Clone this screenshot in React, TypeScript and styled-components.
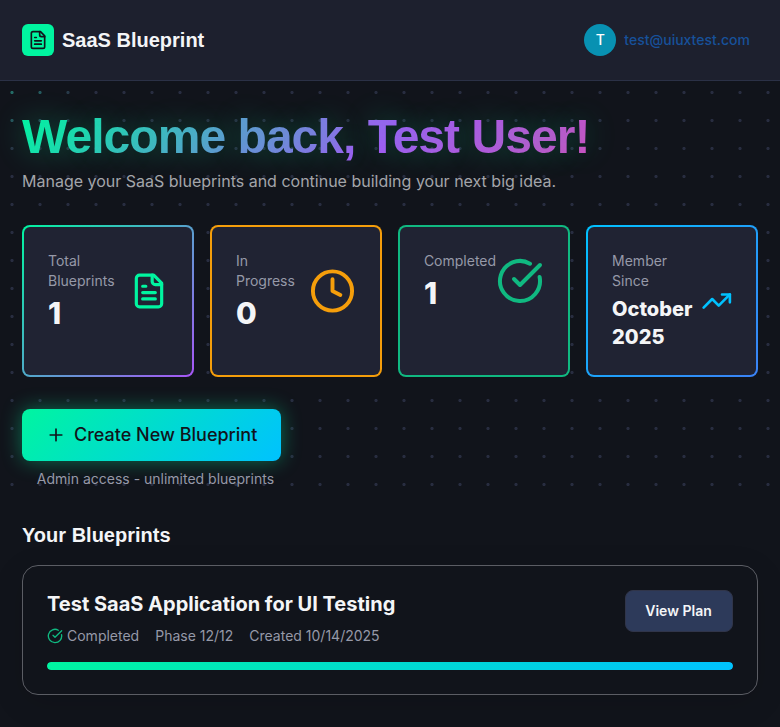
import React from "react";
import styled, { createGlobalStyle } from "styled-components";

const GlobalStyle = createGlobalStyle`
  *, *::before, *::after { box-sizing: border-box; }
  html, body { margin: 0; background: #11141b; }
  body { overflow: hidden; font-family: Inter, "Noto Sans", sans-serif; color: #f4f5f7; }
  h1, h2, h3, p { margin: 0; }
`;

const Page = styled.div`
  height: 727px;
  overflow: hidden;
  display: flex;
  flex-direction: column;
  background: #11141b;
`;

const Header = styled.header`
  height: 81px;
  flex: none;
  padding: 0 30px 0 22px;
  display: flex;
  align-items: center;
  justify-content: space-between;
  background: #1d202e;
  border-bottom: 1px solid #2b3146;
`;

const Brand = styled.div`
  display: flex;
  align-items: center;
  gap: 8px;
  font: 700 20px/28px "Liberation Sans", Arial, sans-serif;
`;

const LogoTile = styled.span`
  width: 32px;
  height: 32px;
  border-radius: 6px;
  display: grid;
  place-items: center;
  color: #11141b;
  background: #00f5a0;
`;

const Account = styled.div`
  display: flex;
  align-items: center;
  gap: 8px;
  font-size: 14px;
  line-height: 20px;
  font-weight: 500;
  color: #17519a;
`;

const Avatar = styled.span`
  width: 32px;
  height: 32px;
  border-radius: 50%;
  display: grid;
  place-items: center;
  color: #fff;
  background: #0891b2;
`;

const Main = styled.main`
  position: relative;
  flex: 1;
  padding: 32px 22px;
`;

const DotGrid = styled.div`
  position: absolute;
  inset: 0 0 auto;
  height: 420px;
  background: radial-gradient(circle at 8px 0, #23756a 0, #25575d 36px, #282d40 72px);
  mask-image: radial-gradient(circle at 14px 14.5px, #000 1.2px, transparent 2px);
  mask-size: 28px 28px;
  mask-position: -2px -3px;
`;

const Content = styled.div`
  position: relative;
`;

const Title = styled.h1`
  font: 700 48px/48px "Liberation Sans", Arial, sans-serif;
  letter-spacing: -0.96px;
  color: transparent;
  background: linear-gradient(135deg, #00f5a0 0%, #a855f7 50%, #ec4899 100%);
  background-clip: text;
  text-shadow: 0 0 30px rgba(0, 245, 160, 0.3);
`;

const Lead = styled.p`
  margin-top: 8px;
  font-size: 16px;
  line-height: 24px;
  color: #a3a5aa;
`;

const Stats = styled.section`
  margin-top: 32px;
  display: grid;
  grid-template-columns: repeat(4, 1fr);
  gap: 16px;
`;

const StatCard = styled.article<{ $edge: string }>`
  height: 152px;
  padding: 24px;
  border: 2px solid transparent;
  border-radius: 8px;
  background: linear-gradient(#202333, #202333) padding-box, ${(p) => p.$edge} border-box;
`;

const StatRow = styled.div`
  display: flex;
  align-items: center;
  justify-content: space-between;
`;

const StatLabel = styled.p`
  font-size: 14px;
  line-height: 20px;
  color: #9699a8;
`;

const StatValue = styled.p<{ $compact?: boolean }>`
  margin-top: 4px;
  font-size: ${(p) => (p.$compact ? 20 : 30)}px;
  line-height: ${(p) => (p.$compact ? 28 : 36)}px;
  font-weight: 800;
`;

const Icon = styled.svg<{ $size: number; $height?: number; $tint?: string }>`
  width: ${(p) => p.$size}px;
  height: ${(p) => p.$height ?? p.$size}px;
  flex: none;
  display: block;
  fill: none;
  stroke: ${(p) => p.$tint ?? "currentColor"};
  stroke-width: 2;
  stroke-linecap: round;
  stroke-linejoin: round;
`;

const Action = styled.div`
  width: 259px;
  margin: 32px 0;
`;

const CreateButton = styled.button`
  width: 259px;
  height: 52px;
  padding: 0 0 0 24px;
  display: flex;
  align-items: center;
  gap: 8px;
  border: 0;
  border-radius: 8px;
  font: 500 18px/28px Inter, sans-serif;
  color: #11141b;
  background: linear-gradient(135deg, #00f5a0, #00c2ff);
  box-shadow: 0 0 20px rgba(0, 245, 160, 0.4);
`;

const ActionNote = styled.p`
  margin: 8px 0 0 14.8px;
  font-size: 14px;
  line-height: 20px;
  white-space: nowrap;
  color: #9699a8;
`;

const SectionTitle = styled.h2`
  font: 700 20px/28px "Liberation Sans", Arial, sans-serif;
`;

const Plan = styled.article`
  height: 130px;
  margin-top: 16px;
  padding: 24px;
  border: 1px solid #5b5d64;
  border-radius: 16px;
  background: #11141b;
  box-shadow: 0 8px 32px rgba(0, 0, 0, 0.12);
`;

const PlanHead = styled.div`
  display: flex;
  justify-content: space-between;
`;

const PlanTitle = styled.h3`
  font-size: 20px;
  line-height: 28px;
  font-weight: 700;
`;

const Meta = styled.div`
  margin-top: 8px;
  display: flex;
  gap: 16px;
  font-size: 14px;
  line-height: 20px;
  color: #9699a8;
`;

const Status = styled.span`
  display: flex;
  align-items: center;
  gap: 4px;
`;

const ViewButton = styled.button`
  width: 108px;
  height: 42px;
  padding: 0 1px 0 0;
  border: 1px solid #30354a;
  border-radius: 8px;
  font: 600 14px/20px Inter, sans-serif;
  color: #f4f5f7;
  background: #2d3a5a;
`;

const Progress = styled.div`
  height: 8px;
  margin-top: 16px;
  border-radius: 4px;
  overflow: hidden;
  background: #212333;
`;

const ProgressFill = styled.div`
  height: 100%;
  border-radius: 4px;
  background: linear-gradient(135deg, #00f5a0, #00c2ff);
`;

type GlyphName = "file" | "clock" | "check" | "trend" | "plus";

const glyphs: Record<GlyphName, React.ReactNode> = {
  file: (
    <>
      <path d="M15 2H6a2 2 0 0 0-2 2v16a2 2 0 0 0 2 2h12a2 2 0 0 0 2-2V7Z" />
      <path d="M14 2v4a2 2 0 0 0 2 2h4M10 9H8M16 13H8M16 17H8" />
    </>
  ),
  clock: (
    <>
      <circle cx="12" cy="12" r="10" />
      <path d="M12 6v6l4 2" />
    </>
  ),
  check: (
    <>
      <path d="M21.801 10A10 10 0 1 1 17 3.335" />
      <path d="m9 11 3 3L22 4" />
    </>
  ),
  trend: (
    <>
      <path d="m22 7-8.5 8.5-5-5L2 17" />
      <path d="M16 7h6v6" />
    </>
  ),
  plus: <path d="M5 12h14M12 5v14" />,
};

interface GlyphProps {
  name: GlyphName;
  size: number;
  height?: number;
  tint?: string;
}

function Glyph({ name, size, height, tint }: GlyphProps) {
  return (
    <Icon viewBox="0 0 24 24" $size={size} $height={height} $tint={tint} aria-hidden="true">
      {glyphs[name]}
    </Icon>
  );
}

interface Stat {
  label: string[];
  value: string[];
  icon: GlyphName;
  size: number;
  tint: string;
  edge: string;
}

const stats: Stat[] = [
  { label: ["Total", "Blueprints"], value: ["1"], icon: "file", size: 38, tint: "#00f5a0", edge: "linear-gradient(135deg, #00f5a0, #a855f7)" },
  { label: ["In", "Progress"], value: ["0"], icon: "clock", size: 47, tint: "#f59e0b", edge: "linear-gradient(#f59e0b, #f59e0b)" },
  { label: ["Completed"], value: ["1"], icon: "check", size: 48, tint: "#10b981", edge: "linear-gradient(#10b981, #10b981)" },
  { label: ["Member", "Since"], value: ["October", "2025"], icon: "trend", size: 31.5, tint: "#00c2ff", edge: "linear-gradient(135deg, #00c2ff, #3b82f6)" },
];

function Lines({ items }: { items: string[] }) {
  return (
    <>
      {items.map((line, i) => (
        <React.Fragment key={line}>
          {i > 0 && <br />}
          {line}
        </React.Fragment>
      ))}
    </>
  );
}

export default function App() {
  return (
    <>
      <GlobalStyle />
      <Page>
        <Header>
          <Brand>
            <LogoTile><Glyph name="file" size={20} /></LogoTile>
            SaaS Blueprint
          </Brand>
          <Account>
            <Avatar>T</Avatar>
            test@uiuxtest.com
          </Account>
        </Header>
        <Main>
          <DotGrid />
          <Content>
            <Title>Welcome back, Test User!</Title>
            <Lead>Manage your SaaS blueprints and continue building your next big idea.</Lead>
            <Stats>
              {stats.map((s) => (
                <StatCard key={s.icon} $edge={s.edge}>
                  <StatRow>
                    <div>
                      <StatLabel><Lines items={s.label} /></StatLabel>
                      <StatValue $compact={s.value.length > 1}><Lines items={s.value} /></StatValue>
                    </div>
                    <Glyph name={s.icon} size={s.size} height={48} tint={s.tint} />
                  </StatRow>
                </StatCard>
              ))}
            </Stats>
            <Action>
              <CreateButton><Glyph name="plus" size={20} />Create New Blueprint</CreateButton>
              <ActionNote>Admin access - unlimited blueprints</ActionNote>
            </Action>
            <SectionTitle>Your Blueprints</SectionTitle>
            <Plan>
              <PlanHead>
                <div>
                  <PlanTitle>Test SaaS Application for UI Testing</PlanTitle>
                  <Meta>
                    <Status><Glyph name="check" size={16} tint="#10b981" />Completed</Status>
                    <span>Phase 12/12</span>
                    <span>Created 10/14/2025</span>
                  </Meta>
                </div>
                <ViewButton>View Plan</ViewButton>
              </PlanHead>
              <Progress><ProgressFill /></Progress>
            </Plan>
          </Content>
        </Main>
      </Page>
    </>
  );
}
